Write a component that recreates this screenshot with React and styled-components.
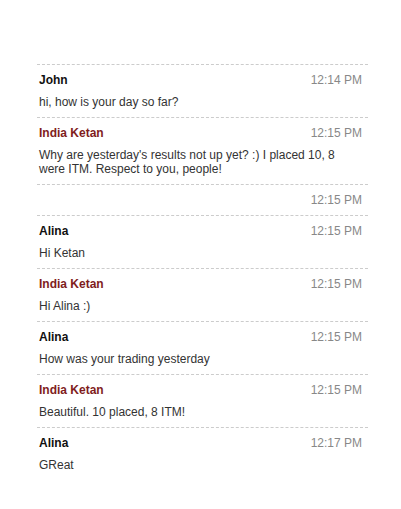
import React from "react";
import styled, { createGlobalStyle } from "styled-components";

const Global = createGlobalStyle`
  html, body { margin: 0; padding: 0; background: #fff; }
  body { font-family: "Liberation Sans", Arial, sans-serif; }
`;

const Page = styled.div`
  padding: 64px 0 0 37px;
`;

const List = styled.ul`
  list-style: none;
  margin: 0;
  padding: 0;
  width: 331px;
`;

const Item = styled.li`
  border-top: 1px dashed #ccc;
  padding: 8px 6px 7px 2px;
`;

const Header = styled.div`
  display: flex;
  justify-content: space-between;
  align-items: center;
  font-size: 12px;
  line-height: 15px;
`;

const Name = styled.span`
  font-weight: bold;
  color: ${(p) => (p.$highlight ? "#7f1d1d" : "#111")};
`;

const Time = styled.span`
  color: #888;
  margin-left: auto;
`;

const Message = styled.p`
  margin: 7px 0 1px;
  font-size: 12px;
  line-height: 14px;
  color: #333;
`;

const messages = [
  { name: "John", time: "12:14 PM", text: "hi, how is your day so far?" },
  {
    name: "India Ketan",
    hl: true,
    time: "12:15 PM",
    text: "Why are yesterday's results not up yet? :) I placed 10, 8 were ITM. Respect to you, people!",
  },
  { name: "", time: "12:15 PM", text: "" },
  { name: "Alina", time: "12:15 PM", text: "Hi Ketan" },
  { name: "India Ketan", hl: true, time: "12:15 PM", text: "Hi Alina :)" },
  { name: "Alina", time: "12:15 PM", text: "How was your trading yesterday" },
  { name: "India Ketan", hl: true, time: "12:15 PM", text: "Beautiful. 10 placed, 8 ITM!" },
  { name: "Alina", time: "12:17 PM", text: "GReat" },
];

export default function App() {
  return (
    <Page>
      <Global />
      <List>
        {messages.map((m, i) => (
          <Item key={i}>
            <Header>
              {m.name && <Name $highlight={m.hl}>{m.name}</Name>}
              <Time>{m.time}</Time>
            </Header>
            {m.text && <Message>{m.text}</Message>}
          </Item>
        ))}
      </List>
    </Page>
  );
}
